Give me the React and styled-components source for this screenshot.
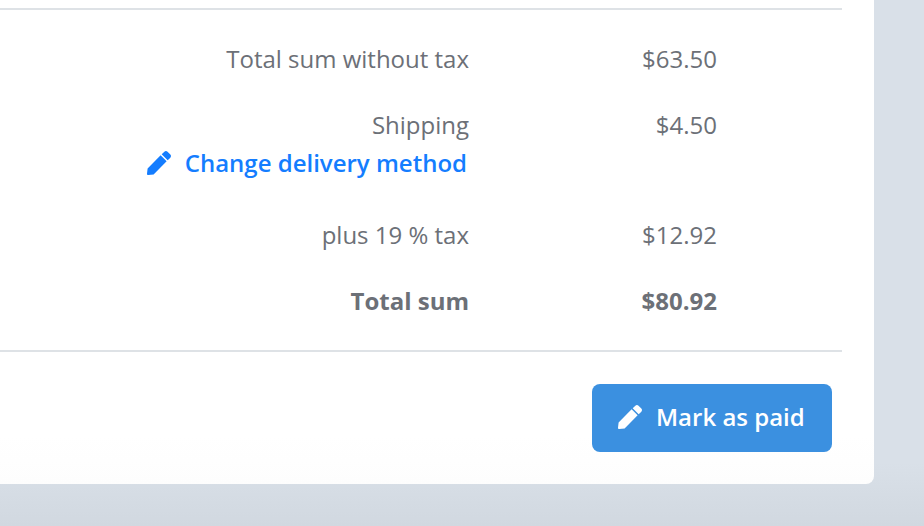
import React from "react";
import styled, { createGlobalStyle } from "styled-components";
import { FaPen } from "react-icons/fa";

const GlobalStyle = createGlobalStyle`
  *, *::before, *::after { box-sizing: border-box; }
  html { height: 100%; }
  body {
    margin: 0;
    min-height: 100%;
    background: linear-gradient(#d9e0e8 0%, #d9e0e8 88%, #d1d8e0 100%);
    color: #6c7077;
    font: 400 24px/38px "Open Sans", sans-serif;
  }
`;

const Page = styled.main`
  padding: 0 50px 42px 0;
`;

const Card = styled.section`
  padding: 8px 32px 32px 0;
  background: linear-gradient(#fff 90%, #fdfdfd);
  border-radius: 0 0 8px 0;
`;

const Totals = styled.div`
  padding: 16px 0;
  border: solid #dee2e6;
  border-width: 2px 0;
`;

const Table = styled.table`
  width: 100%;
  table-layout: fixed;
  border-collapse: collapse;
`;

const LabelColumn = styled.col`
  width: 493px;
`;

const Row = styled.tr`
  font-weight: ${({ $strong }) => ($strong ? 700 : 400)};
`;

const Label = styled.th`
  padding: 14px 24px;
  font-weight: inherit;
  text-align: right;
  vertical-align: top;
`;

const Amount = styled.td`
  padding: 14px 125px 14px 24px;
  text-align: right;
  vertical-align: top;
`;

const EditLink = styled.a`
  display: flex;
  align-items: center;
  justify-content: flex-end;
  gap: 14px;
  padding: 0 2px 6px 0;
  color: #147dff;
  font-weight: 600;
  text-decoration: none;
`;

const Actions = styled.div`
  display: flex;
  justify-content: flex-end;
  padding: 32px 10px 0 0;
`;

const PrimaryButton = styled.button`
  display: flex;
  align-items: center;
  gap: 14px;
  min-width: 240px;
  padding: 14px 26px 16px;
  border: 0;
  border-radius: 8px;
  background: #3b90e0;
  color: #fff;
  font: inherit;
  font-weight: 600;
  cursor: pointer;
`;

const PenIcon = styled(FaPen)`
  flex: none;
  width: 24px;
  height: 24px;
`;

const rows = [
  { label: "Total sum without tax", amount: "$63.50" },
  { label: "Shipping", amount: "$4.50", action: "Change delivery method" },
  { label: "plus 19 % tax", amount: "$12.92" },
  { label: "Total sum", amount: "$80.92", strong: true },
];

export default function App() {
  return (
    <>
      <GlobalStyle />
      <Page>
        <Card>
          <Totals>
            <Table>
              <colgroup>
                <LabelColumn />
                <col />
              </colgroup>
              <tbody>
                {rows.map(({ label, amount, action, strong }) => (
                  <Row key={label} $strong={strong}>
                    <Label scope="row">
                      {label}
                      {action && (
                        <EditLink href="#delivery">
                          <PenIcon aria-hidden="true" />
                          {action}
                        </EditLink>
                      )}
                    </Label>
                    <Amount>{amount}</Amount>
                  </Row>
                ))}
              </tbody>
            </Table>
          </Totals>
          <Actions>
            <PrimaryButton type="button">
              <PenIcon aria-hidden="true" />
              Mark as paid
            </PrimaryButton>
          </Actions>
        </Card>
      </Page>
    </>
  );
}
